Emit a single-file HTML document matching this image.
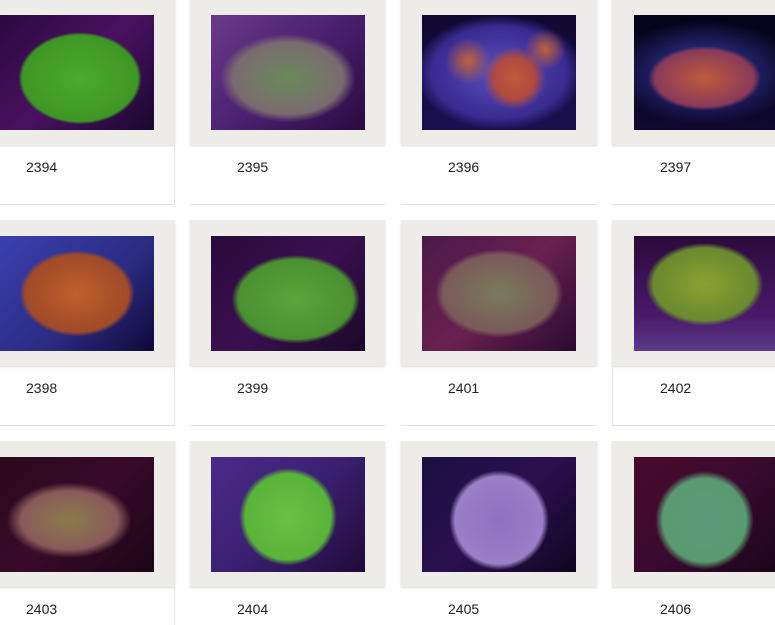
<!DOCTYPE html>
<html><head><style>
body{margin:0;width:775px;height:625px;overflow:hidden;background:#fff;position:relative;font-family:"Liberation Sans",sans-serif}
.f{position:absolute;background:#eeece8;box-shadow:0 1px 2px rgba(0,0,0,.15)}
.i{position:absolute;width:154px;height:115px}
.l{position:absolute;font-size:14px;color:#222}
.s{position:absolute;height:1px;background:#e2e2e2}
.v{position:absolute;width:1px;background:#e6e6e6}
</style></head><body>
<div class="f" style="left:-5px;top:-5px;width:180px;height:150px"></div>
<div class="f" style="left:190px;top:-5px;width:195px;height:150px"></div>
<div class="f" style="left:401px;top:-5px;width:196px;height:150px"></div>
<div class="f" style="left:612px;top:-5px;width:190px;height:150px"></div>
<div class="f" style="left:-5px;top:220px;width:180px;height:146px"></div>
<div class="f" style="left:190px;top:220px;width:195px;height:146px"></div>
<div class="f" style="left:401px;top:220px;width:196px;height:146px"></div>
<div class="f" style="left:612px;top:220px;width:190px;height:146px"></div>
<div class="f" style="left:-5px;top:441px;width:180px;height:146px"></div>
<div class="f" style="left:190px;top:441px;width:195px;height:146px"></div>
<div class="f" style="left:401px;top:441px;width:196px;height:146px"></div>
<div class="f" style="left:612px;top:441px;width:190px;height:146px"></div>
<div class="s" style="left:0;top:204px;width:175px"></div>
<div class="s" style="left:190px;top:204px;width:195px"></div>
<div class="s" style="left:401px;top:204px;width:196px"></div>
<div class="s" style="left:612px;top:204px;width:163px"></div>
<div class="s" style="left:0;top:425px;width:175px"></div>
<div class="s" style="left:190px;top:425px;width:195px"></div>
<div class="s" style="left:401px;top:425px;width:196px"></div>
<div class="s" style="left:612px;top:425px;width:163px"></div>
<div class="v" style="left:174px;top:145px;height:60px"></div>
<div class="v" style="left:174px;top:366px;height:60px"></div>
<div class="v" style="left:174px;top:587px;height:38px"></div>
<div class="v" style="left:612px;top:366px;height:60px"></div>
<div class="i" style="left:0;top:15px;background:radial-gradient(ellipse 50% 50% at 52% 55%,#4caa2c 0,#3e9624 75%,transparent 80%),linear-gradient(135deg,#2a0a40,#4a1060 50%,#1a0830)"></div>
<div class="i" style="left:211px;top:15px;background:radial-gradient(ellipse 55% 48% at 50% 55%,#6a8a5a 0,#7a6a70 65%,transparent 80%),linear-gradient(135deg,#6a3a8a,#4a2070 50%,#2a0a40)"></div>
<div class="i" style="left:422px;top:15px;background:radial-gradient(circle at 60% 55%,#c05a3a 0,#b04a40 18%,transparent 28%),radial-gradient(circle at 30% 40%,#c0603a 0,transparent 18%),radial-gradient(circle at 80% 30%,#c0603a 0,transparent 14%),radial-gradient(ellipse 55% 50% at 50% 50%,#5a50c0,#3a2a90 80%,transparent),linear-gradient(#100830,#1a1050)"></div>
<div class="i" style="left:634px;top:15px;width:141px;background:radial-gradient(ellipse 50% 35% at 50% 55%,#c05a3a 0,#8a3a5a 70%,transparent 80%),radial-gradient(ellipse 65% 45% at 50% 50%,#3a40b0,transparent),linear-gradient(#05041a,#100830)"></div>
<div class="i" style="left:0;top:236px;background:radial-gradient(ellipse 48% 48% at 50% 50%,#c0602a 0,#a04a2a 70%,transparent 78%),linear-gradient(135deg,#3a40b0,#2a2a80 60%,#10083a)"></div>
<div class="i" style="left:211px;top:236px;background:radial-gradient(ellipse 52% 48% at 55% 55%,#5aa63a 0,#4a9030 72%,transparent 80%),linear-gradient(135deg,#2a0a3a,#3a1050 50%,#1a0828)"></div>
<div class="i" style="left:422px;top:236px;background:radial-gradient(ellipse 52% 48% at 50% 50%,#7a7a5a 0,#7a5a5a 70%,transparent 80%),linear-gradient(135deg,#4a1a4a,#6a2050 50%,#2a0a30)"></div>
<div class="i" style="left:634px;top:236px;width:141px;background:radial-gradient(ellipse 52% 45% at 50% 42%,#8aa030 0,#6a8a30 70%,transparent 80%),linear-gradient(#2a0a3a,#4a1a6a 70%,#5a3a8a)"></div>
<div class="i" style="left:0;top:457px;background:radial-gradient(ellipse 52% 42% at 45% 55%,#8a7a4a 0,#8a5a5a 60%,transparent 78%),linear-gradient(135deg,#2a0a1a,#3a0a2a 50%,#1a0514)"></div>
<div class="i" style="left:211px;top:457px;background:radial-gradient(circle at 50% 52%,#6ac040 0,#5ab43a 44%,transparent 50%),linear-gradient(135deg,#4a2a8a,#3a2070 50%,#200a3a)"></div>
<div class="i" style="left:422px;top:457px;background:radial-gradient(circle at 50% 55%,#8a70c0 0,#9a80c8 44%,transparent 50%),linear-gradient(135deg,#1a1040,#2a1050 50%,#100520)"></div>
<div class="i" style="left:634px;top:457px;width:141px;background:radial-gradient(circle at 50% 55%,#5a9a7a 0,#5a9a70 44%,transparent 52%),linear-gradient(135deg,#4a0a2a,#3a0a30 50%,#1a0518)"></div>
<div class="l" style="left:26px;top:159px">2394</div>
<div class="l" style="left:237px;top:159px">2395</div>
<div class="l" style="left:448px;top:159px">2396</div>
<div class="l" style="left:660px;top:159px">2397</div>
<div class="l" style="left:26px;top:380px">2398</div>
<div class="l" style="left:237px;top:380px">2399</div>
<div class="l" style="left:448px;top:380px">2401</div>
<div class="l" style="left:660px;top:380px">2402</div>
<div class="l" style="left:26px;top:601px">2403</div>
<div class="l" style="left:237px;top:601px">2404</div>
<div class="l" style="left:448px;top:601px">2405</div>
<div class="l" style="left:660px;top:601px">2406</div>
</body></html>
